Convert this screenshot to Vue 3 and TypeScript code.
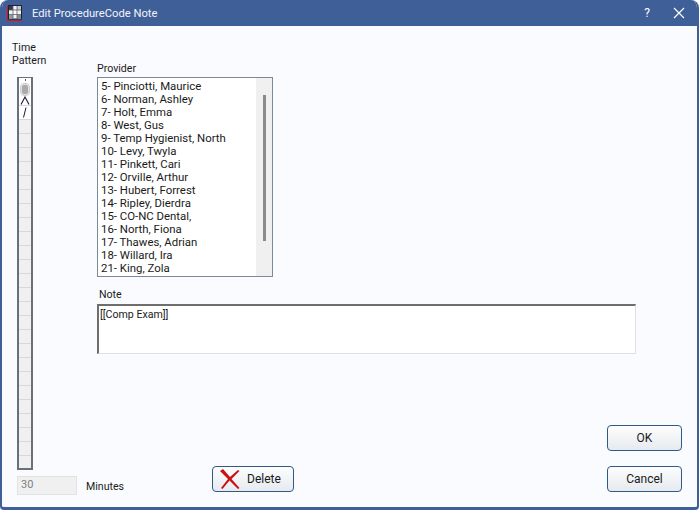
<script setup lang="ts">
const providers: string[] = [
  '5- Pinciotti, Maurice', '6- Norman, Ashley', '7- Holt, Emma', '8- West, Gus',
  '9- Temp Hygienist, North', '10- Levy, Twyla', '11- Pinkett, Cari', '12- Orville, Arthur',
  '13- Hubert, Forrest', '14- Ripley, Dierdra', '15- CO-NC Dental,', '16- North, Fiona',
  '17- Thawes, Adrian', '18- Willard, Ira', '21- King, Zola'
]
const emptyCells: number[] = Array.from({ length: 25 }, (_, i) => i)
</script>

<template>
  <div class="window">
    <header class="titlebar">
      <svg class="app-icon" width="16" height="16" viewBox="0 0 16 16">
        <path d="M0.5 1 V15.5 H15" stroke="#e01010" stroke-width="1" fill="none" />
        <rect x="1.5" y="0.5" width="13" height="13.5" fill="#f2f2f2" stroke="#1c2433" />
        <rect x="2" y="1" width="4" height="4" fill="#333a48" />
        <rect x="10" y="1" width="4" height="4" fill="#c8c8c8" />
        <rect x="2" y="10" width="4" height="3.5" fill="#9a9a9a" />
        <rect x="6" y="5" width="4" height="4.5" fill="#ffffff" />
        <rect x="10" y="10" width="4" height="3.5" fill="#8a8a8a" />
        <path d="M6 1 V14 M10 1 V14 M2 5 H14 M2 9.5 H14" stroke="#5a6070" stroke-width="0.8" fill="none" />
      </svg>
      <span class="title">Edit ProcedureCode Note</span>
      <span class="help">?</span>
      <svg class="close" width="12" height="12" viewBox="0 0 12 12">
        <path d="M1 1 L11 11 M11 1 L1 11" stroke="#fff" stroke-width="1.2" fill="none" />
      </svg>
    </header>

    <div class="body">
      <aside class="left">
        <div class="tp-label">Time<br />Pattern</div>
        <div class="tp-bar">
          <div class="cell first"><span class="dot"></span><span class="pill"></span></div>
          <div class="cell caret">
            <svg width="10" height="9" viewBox="0 0 10 9">
              <path d="M1 8.5 L5 1 L9 8.5" stroke="#1c1c3c" stroke-width="1.1" fill="none" />
            </svg>
          </div>
          <div class="cell slash">
            <svg width="12" height="13" viewBox="0 0 12 13">
              <path d="M4.5 11.5 L7 1.5" stroke="#1c1c3c" stroke-width="1" fill="none" />
            </svg>
          </div>
          <div v-for="n in emptyCells" :key="n" class="cell empty"></div>
        </div>
        <div class="minutes">
          <div class="min-input">30</div>
          <span class="min-label">Minutes</span>
        </div>
      </aside>

      <main class="main">
        <label class="provider-label">Provider</label>
        <div class="listbox">
          <ul class="items">
            <li v-for="p in providers" :key="p">{{ p }}</li>
          </ul>
          <div class="track"><div class="thumb"></div></div>
        </div>
        <label class="note-label">Note</label>
        <div class="note">[[Comp Exam]]</div>
        <div class="spacer"></div>
        <div class="ok-row"><button class="btn wide">OK</button></div>
        <div class="bottom-row">
          <button class="btn delete">
            <svg width="22" height="22" viewBox="0 0 22 22">
              <path d="M1 3 L4 1 L11 9 L19 2 L20.5 3 L12.5 11 L20.5 20 L19 21 L10.5 12.5 L3.5 21 L2 20 L9 11 Z" fill="#cc1010" />
            </svg>
            <span>Delete</span>
          </button>
          <button class="btn wide">Cancel</button>
        </div>
      </main>
    </div>
  </div>
</template>

<style>
html, body { margin: 0; padding: 0; background: #fff; }
</style>

<style scoped>
.window {
  box-sizing: border-box;
  width: 699px;
  height: 510px;
  display: flex;
  flex-direction: column;
  background: #fafbff;
  border: solid #3f5f98;
  border-width: 0 2px 3px 2px;
  border-radius: 8px 8px 4px 4px;
  overflow: hidden;
  font-family: Roboto, "Liberation Sans", sans-serif;
  font-size: 10.6px;
  color: #1a1a1a;
}
.titlebar {
  flex: 0 0 26px;
  display: flex;
  align-items: center;
  background: #3f5f98;
  color: #fff;
  padding-left: 5px;
}
.app-icon { margin-right: 9px; }
.title { font-size: 11.2px; flex: 1; color: #f2f4fa; }
.help { font-size: 12px; margin-right: 23px; color: #fff; }
.close { margin-right: 12px; }
.body {
  flex: 1;
  display: flex;
  min-height: 0;
}
.left {
  width: 95px;
  flex: none;
  padding-left: 10px;
  box-sizing: border-box;
}
.tp-label { margin-top: 15px; line-height: 13px; height: 36px; }
.tp-bar {
  box-sizing: border-box;
  margin-left: 5px;
  width: 16px;
  height: 393px;
  border: 2px solid #69707a;
  border-top-width: 1px;
  background: #f0f0f0;
  overflow: hidden;
}
.cell {
  box-sizing: border-box;
  height: 14px;
  border-bottom: 1px solid #d8d8d8;
  display: flex;
  justify-content: center;
  align-items: center;
}
.first, .caret, .slash { background: #fff; }
.first { height: 18px; flex-direction: column; justify-content: flex-start; border-bottom: 0; }
.caret { height: 10px; overflow: hidden; }
.slash { height: 14px; }
.dot { width: 1px; height: 2px; background: #555; margin-top: 1px; }
.pill {
  box-sizing: border-box;
  width: 8px;
  height: 11px;
  margin-top: 3px;
  background: #aaa;
  border: 1px solid #e0e0e0;
  border-radius: 3px;
  outline: 1px solid #ccc;
}
.minutes {
  display: flex;
  align-items: center;
  width: 120px;
  margin: 6px 0 0 5px;
}
.min-input {
  box-sizing: border-box;
  flex: none;
  width: 60px;
  height: 19px;
  padding: 0 3px;
  line-height: 16px;
  font-size: 11px;
  background: #f0f0f0;
  border: 1px solid #e2e2e2;
  color: #808080;
}
.min-label { margin-left: 9px; padding-top: 1px; white-space: nowrap; }
.main {
  flex: 1;
  display: flex;
  flex-direction: column;
  padding-top: 34px;
  padding-bottom: 15px;
  min-width: 0;
}
.provider-label { line-height: 17px; }
.listbox {
  box-sizing: border-box;
  width: 176px;
  height: 200px;
  display: flex;
  border: 1px solid #7a8a9a;
  background: #fff;
}
.items {
  flex: 1;
  list-style: none;
  margin: 0;
  padding: 2px 0 0 3px;
  font-size: 11.4px;
}
.items li { line-height: 13px; height: 13px; white-space: nowrap; }
.track {
  flex: 0 0 16px;
  background: #f0f0f0;
  display: flex;
  justify-content: center;
  padding-top: 17px;
  box-sizing: border-box;
}
.thumb { width: 3px; height: 146px; background: #8a8a8a; }
.note-label { margin: 9px 0 0 2px; line-height: 17px; }
.note {
  box-sizing: border-box;
  width: 539px;
  height: 50px;
  margin-top: 1px;
  padding: 2px 1px;
  background: #fff;
  border: 1px solid #e0e0e0;
  border-top: 2px solid #6e6e6e;
  border-left: 2px solid #6e6e6e;
  line-height: 13px;
}
.spacer { flex: 1; }
.ok-row { display: flex; justify-content: flex-end; padding-right: 15px; }
.bottom-row {
  display: flex;
  justify-content: space-between;
  margin-top: 15px;
  padding: 0 15px 0 115px;
}
.btn {
  box-sizing: border-box;
  height: 26px;
  font: inherit;
  font-size: 12px;
  color: #1a1a1a;
  border: 1px solid #2f5a88;
  border-radius: 4px;
  background: linear-gradient(#fdfdfe, #e6eaee);
  padding: 0;
}
.wide { width: 75px; }
.delete {
  width: 82px;
  display: flex;
  align-items: center;
  padding-left: 6px;
}
.delete span { margin-left: 6px; }
</style>
